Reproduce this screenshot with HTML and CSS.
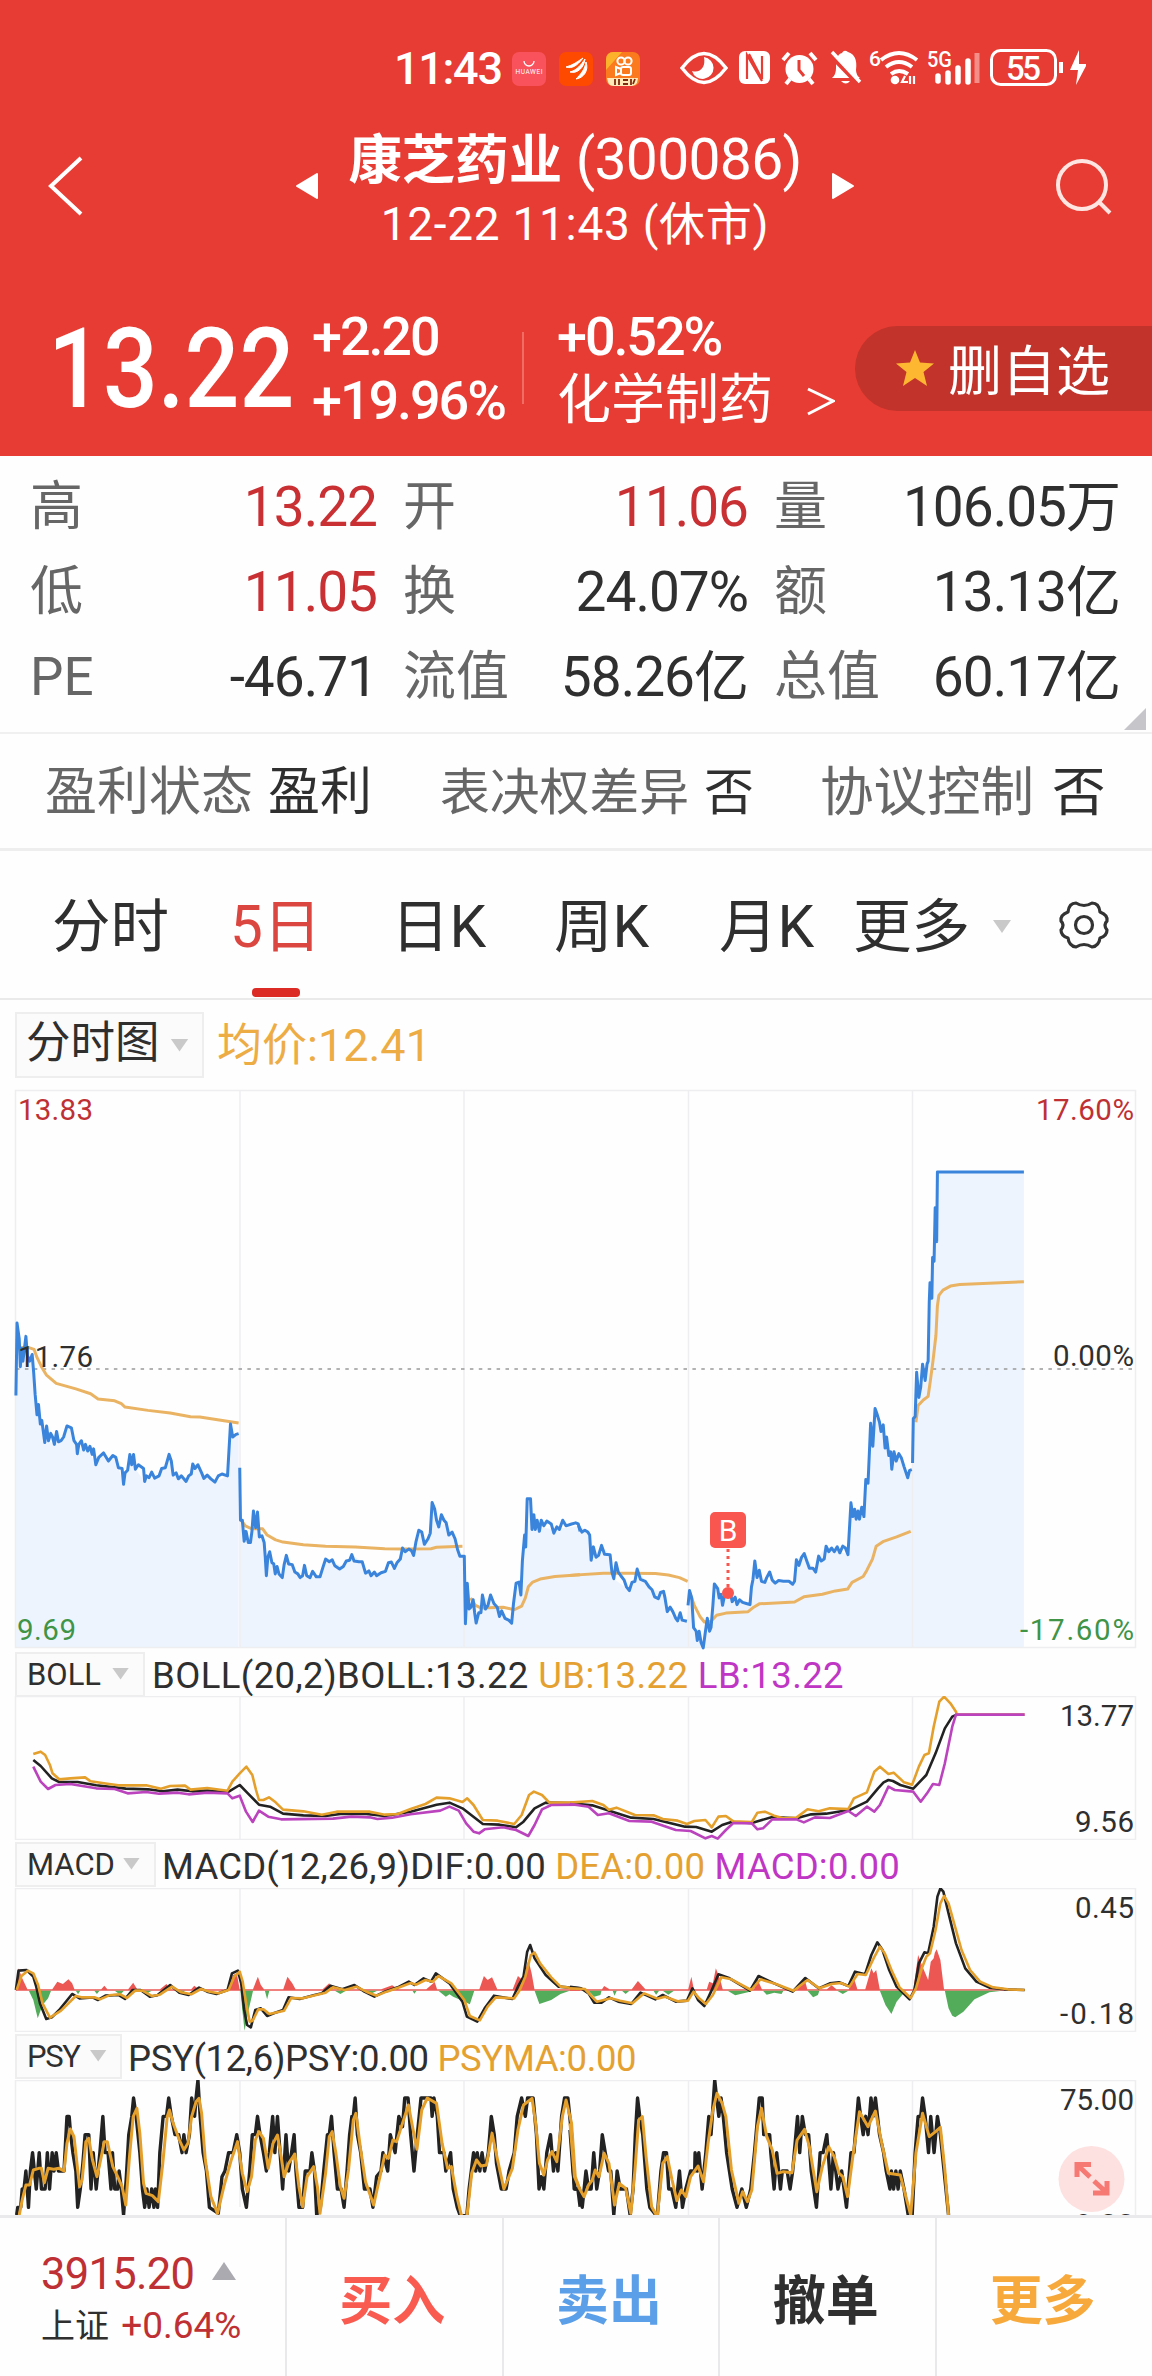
FILE: index.html
```html
<!DOCTYPE html>
<html lang="zh-CN">
<head>
<meta charset="utf-8">
<title>康芝药业 (300086)</title>
<link rel="stylesheet" href="styles.css">
</head>
<body>
<header class="header">
  <div class="status">
    <span class="clock">11:43</span>
    <svg class="app" viewBox="0 0 34 34"><rect width="34" height="34" rx="7" fill="#f9525c"/><path d="M12 9a5 5 0 0 0 10 0" fill="none" stroke="#fff" stroke-width="1.3"/><text x="17" y="22" font-size="6.5" fill="#fff" text-anchor="middle" textLength="27">HUAWEI</text></svg>
    <svg class="app" viewBox="0 0 34 34"><rect width="34" height="34" rx="7" fill="#fd4a00"/><path d="M7 15C14 13 18 10 24 6 18 14 13 17 7 15ZM11 20C18 18 22 13 26 7 25 16 18 22 11 20ZM17 27C22 22 26 17 27 10 30 18 25 26 17 27Z" fill="#fff" stroke="#fff"/></svg>
    <svg class="app" viewBox="0 0 34 34"><rect width="34" height="34" rx="7" fill="#fb7a1e"/><path d="M0 18V7a7 7 0 0 1 7-7h9Z" fill="#fdb22c"/><g fill="none" stroke="#fff" stroke-width="2"><circle cx="15" cy="9" r="3.6"/><circle cx="22" cy="9" r="3.6"/><rect x="15" y="15" width="10" height="8" rx="2"/><path d="M15 17l-5-2v8l5-2"/></g><path d="M1 26h31l-1 5q-2 3-5 3H8q-5 0-6-4Z" fill="#ffe9b8"/><path d="M9 27v6M13 27v6M17 28h5M17 32h5M25 27v6M29 27l-2 5" stroke="#7c2c12" stroke-width="1.8"/></svg>
    <svg class="sys" width="408" height="40" viewBox="678 48 408 40" fill="none" stroke="#fff">
      <path d="M682 68Q704 39 726 68Q704 97 682 68Z" stroke-width="3.5"/><path d="M704 57a11 11 0 1 1-12 14q7 2 11-4 2-4 1-10Z" fill="#fff" stroke="none"/>
      <rect x="739" y="51" width="31" height="33" rx="6" fill="#fff" stroke="none"/><path d="M747 79V55l15 26M762 56v23L749 54" stroke="#e73c33" stroke-width="2.200"/>
      <circle cx="799.500" cy="69" r="14" fill="#fff" stroke="none"/><path d="M783 60l6-7M816 60l-6-7M790 79l-4 5M809 79l4 5" stroke-width="4"/><path d="M799 60v10l5 6" stroke="#e73c33" stroke-width="3"/>
      <path d="M832 78q4-3 4-10 0-14 6-15 2-4 6-1 10 3 8 18 0 5 4 8Z" fill="#fff" stroke="none"/><path d="M829 54l29 30" stroke="#e73c33" stroke-width="4"/><path d="M832 52l28 30" stroke-width="3.500"/><path d="M841 81h9q-4 5-9 0Z" fill="#fff" stroke="none"/>
      <path d="M881 60q18-14 36 0M886 67q13-10 26 0M891 74q8-6 17 0" stroke-width="4"/><circle cx="895" cy="80" r="4.300" fill="#fff" stroke="none"/><path d="M905 76l-3 6h6M910 76v8M914 76v8" stroke-width="2.200"/>
      <text x="869" y="66" font-size="21" font-weight="500">6</text><text x="927" y="67" font-size="22" font-weight="500" textLength="25" lengthAdjust="spacingAndGlyphs">5G</text>
      <path d="M938 76v5M948 73v9M958 68v14M968 61v21" stroke-width="5.500" stroke-linecap="round"/><path d="M977 53v30" stroke-width="5" stroke="#f48e88"/>
      <rect x="991.500" y="50.500" width="64" height="34" rx="9" stroke-width="3"/><path d="M1061 62v11" stroke-width="4"/><text x="1023.500" y="80" font-size="33" font-weight="500" text-anchor="middle" textLength="35">55</text>
      <path d="M1079 50l-9 20h8l-2 15 11-21h-8Z" fill="#fff" stroke="none"/>
    </svg>
  </div>
  <div class="titlebar">
    <svg class="back" viewBox="0 0 36 60"><path d="M33 2L3 30l30 28" fill="none" stroke="#fff" stroke-width="4"/></svg>
    <svg class="prev" viewBox="0 0 24 28"><path d="M22 2v24L2 14Z" fill="#fff" stroke="#fff" stroke-width="2" stroke-linejoin="round"/></svg>
    <div class="heading"><div class="name"><b>康芝药业</b> <span>(300086)</span></div><div class="time">12-22 11:43 (休市)</div></div>
    <svg class="next" viewBox="0 0 24 28"><path d="M2 2v24L22 14Z" fill="#fff" stroke="#fff" stroke-width="2" stroke-linejoin="round"/></svg>
    <svg class="search" viewBox="0 0 56 56"><circle cx="26" cy="26" r="24" fill="none" stroke="#ffe5e2" stroke-width="4"/><path d="M43 43l11 11" stroke="#ffe5e2" stroke-width="4"/></svg>
  </div>
  <div class="quote">
    <div class="price"><span>13.22</span></div>
    <div class="change"><span>+2.20</span><span>+19.96%</span></div>
    <div class="sector"><span class="sector-rate">+0.52%</span><span>化学制药</span></div>
    <svg class="chev" viewBox="0 0 28 30"><path d="M1 2l25 12L1 27" fill="none" stroke="#fff" stroke-width="3"/></svg>
    <div class="fav"><svg viewBox="0 0 38 36"><path d="M19 0l5 12.500 14 1-10.500 8.500 3.500 14L19 28 7 36l3.500-14L0 13.500l14-1Z" fill="#fdb731"/></svg><span>删自选</span></div>
  </div>
</header>
<section class="stats">
  <div class="stat"><label>高</label><span class="up">13.22</span></div><div class="stat"><label>开</label><span class="up">11.06</span></div><div class="stat"><label>量</label><span>106.05万</span></div>
  <div class="stat"><label>低</label><span class="up">11.05</span></div><div class="stat"><label>换</label><span>24.07%</span></div><div class="stat"><label>额</label><span>13.13亿</span></div>
  <div class="stat"><label>PE</label><span>-46.71</span></div><div class="stat"><label>流值</label><span>58.26亿</span></div><div class="stat"><label>总值</label><span>60.17亿</span></div>
  <i class="corner"></i>
</section>
<section class="flags">
  <div class="flag f1"><label>盈利状态</label><span>盈利</span></div>
  <div class="flag f2"><label>表决权差异</label><span>否</span></div>
  <div class="flag f3"><label>协议控制</label><span>否</span></div>
</section>
<nav class="tabs">
  <a>分时</a><a class="on">5日</a><a>日K</a><a>周K</a><a>月K</a><a>更多</a>
  <i class="tri"></i>
  <svg class="gear" viewBox="-26 -26 52 52" fill="none" stroke="#333" stroke-width="3.200" stroke-linejoin="round"><path d="M-8-22Q0-17 8-22Q15-22 16-13Q24-10 23-4Q19 0 23 5Q23 11 16 13Q15 21 8 22Q0 17-8 22Q-15 21-16 13Q-23 11-23 5Q-19 0-23-4Q-24-10-16-13Q-15-22-8-22Z"/><circle r="8.500"/></svg>
</nav>
<div class="mainbar"><div class="pick big"><span>分时图</span><i class="tri"></i></div><span class="avg">均价:12.41</span></div>
<svg class="chart" width="1152" height="562" viewBox="0 1088 1152 562">
  <g transform="translate(0 1080) scale(.36996)" class="area">
    <path d="M43 1535V853L46 657 52 700 55 775 59 725 62 760 70 693 74 745 80 760 87 742 91 790 95 850 100 905 104 877 109 930 121 980 131 975 147 985 165 975 181 935 193 940 209 1010 231 985 259 1040 280 1008 293 1030 305 1015 320 1048 334 1093 351 1012 361 1012 366 1052 391 1085 430 1070 457 1012 468 1068 503 1085 521 1038 545 1062 581 1087 615 1070 623 930 629 965 645 956V1535Z"/>
    <path d="M648 1535V1190L660 1247 677 1250 685 1165 696 1168 701 1235 714 1250 720 1340 729 1275 744 1335 763 1345 774 1285 811 1345 865 1343 880 1295 928 1315 951 1283 979 1302 988 1333 1042 1328 1066 1320 1088 1265 1118 1285 1132 1217 1147 1255 1163 1225 1168 1142 1186 1208 1206 1197 1230 1240 1243 1287 1254 1287 1258 1470 1263 1360 1287 1468 1304 1392 1344 1425 1383 1468 1395 1360 1408 1392 1425 1132 1434 1132 1443 1205 1497 1215 1568 1205V1535Z"/>
  </g>
  <g transform="translate(570 1080) scale(.37113 .36996)" class="area">
    <path d="M25 1535V1205L48 1222 57 1298 85 1258 108 1283 118 1348 160 1380 181 1322 221 1378 252 1382 262 1437 290 1462 315 1463 322 1380 333 1480 359 1535 370 1455 380 1480 389 1362 411 1420 425 1385 437 1410 485 1418 498 1300 516 1355 600 1363 610 1297 631 1280 662 1330 670 1287 690 1260 749 1283 757 1143 771 1187 792 1180 797 1080 803 1090 810 928 816 990 822 888 838 950 867 1052 886 1010 910 1075 921 1053 925 915 930 910 934 790 940 858 950 768 957 812 965 760 970 548 977 480 990 250 1223 248V1535Z"/>
  </g>
  <path class="grid" d="M15.500 1090.500H1135.500V1647.500H15.500ZM240 1090V1647M464 1090V1647M688.500 1090V1647M912.500 1090V1647"/>
  <path d="M16 1369H1135" stroke="#999" stroke-width="1.600" stroke-dasharray="3.500 5.400"/>
  <text class="lab up" x="18" y="1120" textLength="75">13.83</text>
  <text class="lab dn" x="17" y="1640" textLength="59">9.69</text>
  <g transform="translate(0 1080) scale(.36996)" class="line">
    <g class="avgline">
      <polyline points="46,700 52,725 65,722 80,724 92,728 100,750 112,775 125,797 152,820 205,835 245,848 265,862 310,867 328,875 338,884 400,893 460,900 515,910 540,911 645,927"/>
      <polyline points="652,1190 663,1205 680,1213 710,1213 722,1230 745,1243 765,1249 820,1256 880,1260 960,1262 1040,1267 1090,1268 1165,1267 1180,1263 1250,1260"/>
      <polyline points="1272,1400 1285,1420 1300,1427 1360,1425 1390,1432 1410,1422 1420,1400 1428,1370 1440,1357 1460,1349 1500,1342 1568,1337"/>
    </g>
    <g class="priceline">
      <polyline points="43,853 46,657 52,700 55,775 59,725 62,760 70,693 74,745 80,760 87,742 91,790 95,850 100,905 104,877 109,930 113,920 121,980 126,935 131,975 137,955 142,965 147,985 153,950 158,978 165,975 172,965 181,935 193,940 200,975 207,985 209,1010 213,985 220,975 226,1000 231,985 237,1003 243,990 249,1012 253,997 259,1040 267,1020 280,1008 293,1030 305,1015 313,1020 320,1048 330,1050 334,1093 338,1062 345,1055 351,1012 356,1040 361,1012 366,1052 374,1040 388,1050 391,1085 396,1070 403,1075 410,1060 418,1076 430,1070 437,1050 447,1048 457,1012 463,1030 468,1068 476,1062 482,1078 490,1070 503,1085 510,1070 517,1065 521,1038 527,1050 535,1040 545,1062 551,1077 560,1068 570,1078 581,1087 590,1070 600,1065 615,1070 619,1000 623,930 629,965 638,958 645,956"/>
      <polyline points="648,1048 650,1190 655,1190 660,1247 665,1220 671,1250 677,1250 681,1220 685,1165 691,1210 696,1168 701,1235 708,1232 714,1250 717,1290 720,1340 724,1290 729,1275 735,1305 740,1308 744,1335 749,1315 754,1335 763,1345 768,1310 774,1285 780,1308 790,1310 797,1330 805,1335 811,1345 818,1340 823,1312 829,1340 838,1345 845,1328 855,1343 865,1343 872,1320 880,1295 890,1302 898,1297 905,1313 918,1322 928,1315 936,1300 945,1298 951,1283 957,1300 970,1302 979,1302 988,1333 997,1327 1003,1340 1012,1330 1018,1340 1030,1332 1042,1328 1050,1305 1058,1303 1066,1320 1073,1305 1082,1295 1088,1265 1095,1275 1105,1268 1112,1272 1118,1285 1124,1250 1132,1217 1140,1222 1147,1255 1157,1240 1163,1225 1168,1142 1175,1160 1180,1190 1186,1208 1193,1175 1200,1190 1206,1197 1213,1230 1222,1222 1230,1240 1237,1270 1243,1287 1255,1287 1258,1470 1263,1360 1268,1430 1273,1425 1279,1405 1283,1440 1287,1468 1294,1440 1300,1440 1304,1392 1312,1430 1319,1420 1326,1392 1335,1415 1344,1425 1350,1450 1356,1435 1365,1455 1375,1460 1383,1468 1388,1415 1395,1360 1403,1357 1408,1392 1412,1300 1418,1230 1421,1262 1425,1132 1434,1132 1438,1215 1443,1175 1447,1215 1452,1190 1458,1220 1463,1190 1470,1205 1478,1192 1490,1200 1497,1225 1505,1208 1512,1215 1521,1190 1530,1205 1545,1200 1556,1197 1563,1200 1568,1220"/>
    </g>
  </g>
  <g transform="translate(570 1080) scale(.37113 .36996)" class="line">
    <g class="avgline">
      <polyline points="25,1337 0,1339 90,1333 160,1333 230,1334 265,1338 295,1345 317,1355"/>
      <polyline points="322,1385 335,1420 350,1450 362,1465 380,1463 395,1447 420,1441 480,1437 495,1425 510,1416 605,1411 630,1397 680,1390 715,1381 748,1376 760,1358 790,1342 800,1325 815,1295 825,1260 845,1247 880,1235 918,1220"/>
      <polyline points="932,925 938,880 952,865 965,855 970,820 978,760 986,690 990,610 994,582 1005,568 1025,557 1050,553 1223,545"/>
    </g>
    <g class="priceline">
      <polyline points="23,1205 32,1222 40,1217 48,1222 53,1230 57,1298 63,1262 70,1290 77,1285 85,1258 93,1282 108,1283 113,1330 118,1348 124,1305 130,1330 137,1340 146,1352 152,1370 160,1380 167,1358 175,1355 181,1322 190,1350 203,1355 213,1370 221,1378 228,1397 238,1402 244,1385 252,1382 256,1400 262,1437 270,1425 277,1437 285,1455 290,1462 297,1440 302,1460 315,1463"/>
      <polyline points="318,1420 322,1380 328,1400 333,1480 340,1490 343,1515 348,1490 353,1520 359,1535 365,1490 370,1455 376,1490 380,1480 385,1420 389,1362 398,1375 402,1400 407,1390 411,1420 416,1395 425,1385 432,1385 437,1410 445,1398 450,1418 457,1405 465,1412 475,1415 485,1418 489,1370 493,1350 498,1300 504,1345 510,1325 516,1355 525,1358 530,1345 538,1330 545,1352 553,1360 562,1353 575,1355 590,1355 600,1363 605,1355 610,1297 617,1312 624,1290 631,1280 638,1300 645,1320 655,1320 662,1330 670,1287 677,1300 685,1295 690,1260 697,1275 705,1265 712,1275 720,1262 727,1278 735,1260 742,1265 749,1283 752,1230 757,1143 762,1180 767,1160 771,1187 776,1165 780,1187 786,1155 792,1180 797,1080 803,1090 807,1000 810,928 816,990 822,888 828,905 834,925 838,950 844,932 849,995 853,965 859,1015 864,1005 867,1052 873,1005 879,1030 886,1010 893,1022 900,1045 910,1075 915,1055 921,1053"/>
      <polyline points="923,1035 925,915 930,910 934,790 940,858 945,830 950,768 957,812 962,768 965,760 968,600 970,548 975,590 977,480 981,490 984,345 988,437 990,249 1223,249"/>
    </g>
  </g>
  <text class="lab" x="18" y="1367" textLength="75">11.76</text>
  <text class="lab up" x="1036" y="1120" textLength="98">17.60%</text>
  <text class="lab" x="1053" y="1366" textLength="81">0.00%</text>
  <text class="lab dn" x="1020" y="1640" textLength="114">-17.60%</text>
  <path d="M728 1549V1588" stroke="#f9564f" stroke-width="3" stroke-dasharray="3 4"/>
  <rect x="710" y="1512" width="36" height="36" rx="5" fill="#f9564f"/><text x="728" y="1541" font-size="30" fill="#fff" text-anchor="middle">B</text><circle cx="728" cy="1593" r="6" fill="#f9564f"/>
</svg>
<div class="bar"><div class="pick p1"><span>BOLL</span><i class="tri"></i></div><div class="legend l1"><span>BOLL(20,2)BOLL:13.22</span> <span class="o">UB:13.22</span> <span class="m">LB:13.22</span></div></div>
<svg class="chart" width="1152" height="144" viewBox="0 1696 1152 144">
  <path class="grid" d="M15.500 1696.500H1135.500V1839.500H15.500ZM240 1696V1840M464 1696V1840M688.500 1696V1840M912.500 1696V1840"/>
  <g transform="translate(0 1640) scale(.36996 .33333)" class="line thin">
    <polyline class="k" points="90,360 110,378 140,415 160,426 210,426 260,436 340,446 400,448 440,454 480,449 520,454 560,452 615,457 648,435 670,460 700,494 730,500 765,521 820,526 880,528 920,522 990,522 1040,528 1110,515 1180,494 1215,488 1250,505 1305,552 1350,554 1395,562 1415,545 1445,505 1475,488 1568,490"/>
    <polyline class="oo" points="90,342 110,335 122,345 135,375 142,400 160,418 190,415 230,412 245,424 290,431 320,436 395,436 435,446 460,438 500,437 515,449 560,444 615,452 628,425 648,400 666,380 682,405 692,450 700,480 712,480 727,472 745,487 765,509 820,514 870,524 910,515 1000,515 1040,524 1075,522 1110,507 1150,492 1180,473 1215,475 1250,486 1263,475 1280,495 1305,540 1345,542 1390,552 1410,525 1430,465 1443,455 1465,465 1485,488 1568,488"/>
    <polyline class="mm" points="90,380 110,425 130,447 150,435 190,432 260,445 310,447 345,460 395,456 430,461 480,458 510,463 560,458 615,460 628,475 648,467 665,515 683,546 700,512 725,530 760,538 900,536 950,530 1000,532 1020,537 1060,533 1110,523 1190,512 1215,500 1240,512 1260,550 1280,575 1295,580 1310,568 1360,562 1395,570 1428,588 1445,555 1465,508 1490,495 1568,494"/>
  </g>
  <g transform="translate(570 1640) scale(.37113 .33333)" class="line thin">
    <polyline class="k" points="0,490 60,496 110,514 165,533 225,537 310,560 340,561 382,575 410,555 435,546 490,549 545,531 610,535 650,523 690,521 755,509 800,485 830,445 845,427 858,420 870,423 890,435 925,446 960,405 985,340 1010,265 1030,230 1042,224"/>
    <polyline class="oo" points="0,488 60,483 90,495 105,509 125,503 175,525 225,526 250,537 290,542 315,552 335,543 365,540 382,562 400,530 420,528 440,544 490,546 505,518 525,515 550,527 575,535 610,533 640,508 670,514 700,505 750,507 765,475 800,457 820,395 835,380 858,402 872,398 900,427 922,434 940,380 955,345 967,340 980,260 995,185 1008,170 1025,190 1040,215 1042,224 1225,224"/>
    <polyline class="mm" points="0,492 50,500 75,525 105,520 160,543 220,545 285,570 325,573 365,595 382,588 398,596 420,570 440,549 490,550 505,568 520,565 545,538 610,538 630,547 660,532 700,534 750,513 770,528 800,500 820,515 835,495 858,440 875,450 925,455 945,485 962,460 978,432 995,435 1010,370 1030,260 1040,224 1225,224"/>
  </g>
  <text class="lab big-lab" x="1060" y="1726" textLength="74">13.77</text><text class="lab big-lab" x="1075" y="1832" textLength="59">9.56</text>
</svg>
<div class="bar"><div class="pick p2"><span>MACD</span><i class="tri"></i></div><div class="legend l2"><span>MACD(12,26,9)DIF:0.00</span> <span class="o">DEA:0.00</span> <span class="m">MACD:0.00</span></div></div>
<svg class="chart" width="1152" height="144" viewBox="0 1888 1152 144">
  <path class="grid" d="M15.500 1888.500H1135.500V2031.500H15.500ZM240 1888V2032M464 1888V2032M688.500 1888V2032M912.500 1888V2032"/>
  <g transform="translate(0 1640) scale(.36996 .33333)" class="line thin">
    <path class="rf" d="M43 1048H1568V1052H43ZM45 1050L50 985 60 1015 75 1050ZM140 1050L155 1025 170 1032 185 1018 195 1030 202 1050ZM272 1050L282 1037 292 1050ZM345 1050L360 1028 372 1050ZM430 1050L450 1032 460 1050ZM515 1050L525 1037 540 1050ZM615 1050L630 1005 640 1000 648 1050ZM683 1050L697 1010 705 1035 715 1050ZM765 1050L777 1010 790 1030 800 1050ZM870 1050L890 1030 898 1050ZM1025 1050L1060 1036 1080 1050ZM1150 1050L1175 1026 1182 1050ZM1295 1050L1308 1008 1318 1020 1330 1012 1345 1050ZM1385 1050L1400 1008 1412 1020 1428 960 1437 1000 1445 1050Z"/>
    <path class="gf" d="M78 1052L90 1080 102 1135 115 1095 130 1075 138 1052ZM205 1052L211 1063 217 1052ZM255 1052L262 1062 269 1052ZM310 1052L325 1064 335 1052ZM375 1052L395 1062 410 1052ZM480 1052L492 1062 500 1052ZM650 1052L655 1110 661 1172 672 1110 684 1052ZM716 1052L722 1078 728 1052ZM905 1052L920 1062 935 1052ZM985 1052L1005 1060 1020 1052ZM1115 1052L1120 1061 1126 1052ZM1185 1052L1205 1070 1215 1063 1225 1070 1245 1080 1270 1093 1282 1052ZM1445 1052L1458 1092 1490 1080 1515 1062 1540 1052Z"/>
    <polyline class="k" points="43,1050 50,992 72,990 90,1010 98,1040 108,1090 125,1137 140,1132 160,1110 195,1062 215,1075 250,1072 265,1080 285,1067 320,1065 338,1077 358,1050 380,1050 405,1070 425,1066 460,1035 485,1058 510,1065 538,1043 560,1055 585,1062 615,1050 627,1000 643,992 652,1030 660,1110 668,1155 678,1162 690,1110 705,1105 722,1128 740,1120 765,1110 780,1072 810,1077 850,1065 870,1060 893,1037 925,1048 958,1035 985,1055 1012,1070 1040,1055 1075,1042 1105,1025 1120,1035 1145,1015 1165,1025 1178,1000 1215,1030 1250,1085 1262,1130 1290,1145 1310,1105 1335,1067 1385,1077 1400,1040 1415,1010 1425,935 1433,915 1445,955 1475,1005 1510,1040 1568,1045"/>
    <polyline class="oo" points="45,1050 58,1008 75,992 90,1000 103,1035 115,1090 135,1133 165,1112 205,1068 220,1072 255,1072 270,1078 295,1066 325,1063 343,1074 365,1052 385,1052 410,1068 432,1064 465,1040 490,1057 517,1063 543,1047 567,1055 590,1060 618,1050 633,1010 648,995 656,1025 666,1095 675,1145 683,1142 698,1108 712,1108 728,1122 768,1112 787,1074 818,1075 880,1058 900,1042 932,1050 963,1040 990,1055 1018,1067 1045,1055 1080,1042 1110,1029 1125,1034 1150,1020 1170,1025 1185,1008 1220,1030 1255,1080 1270,1128 1297,1141 1318,1100 1340,1072 1390,1075 1405,1050 1420,1010 1435,945 1445,938 1460,970 1490,1012 1515,1040 1568,1047"/>
  </g>
  <g transform="translate(570 1640) scale(.37113 .33333)" class="line thin">
    <path class="rf" d="M0 1048H1225V1052H0ZM85 1050L92 1038 110 1050ZM165 1050L183 1023 205 1050ZM318 1050L327 1010 334 1050ZM368 1050L375 1025 385 1030 393 985 405 1020 412 1050ZM495 1050L505 1018 518 1050ZM612 1050L632 1018 640 1050ZM690 1050L705 1036 720 1050ZM750 1050L765 1015 775 1050ZM795 1050L808 1000 812 985 818 1000 825 990 835 1050ZM925 1050L938 945 948 975 965 1020 972 965 980 955 983 938 988 928 998 960 1008 1050Z"/>
    <path class="gf" d="M50 1052L65 1070 82 1065 85 1052ZM115 1052L120 1067 126 1052ZM140 1052L150 1062 160 1052ZM225 1052L232 1064 240 1052ZM250 1052L265 1064 280 1052ZM425 1052L445 1066 485 1055 488 1052ZM520 1052L530 1064 550 1058 570 1062 575 1052ZM640 1052L655 1072 668 1065 672 1052ZM720 1052L735 1062 750 1052ZM835 1052L850 1095 866 1122 880 1085 900 1058 905 1052ZM1010 1052L1020 1105 1030 1127 1038 1132 1060 1115 1090 1078 1130 1057 1165 1052Z"/>
    <polyline class="k" points="0,1040 30,1045 50,1060 65,1088 85,1088 105,1072 130,1085 165,1092 190,1058 230,1078 250,1065 285,1085 315,1082 330,1045 345,1080 362,1098 380,1055 400,1003 430,1015 485,1052 508,1008 550,1030 600,1055 634,1014 670,1045 700,1030 725,1027 750,1038 768,995 795,1003 812,945 828,907 842,930 860,990 880,1040 915,1078 928,1050 940,970 955,937 965,940 980,860 990,770 998,745 1006,755 1020,820 1040,910 1065,985 1095,1025 1130,1043 1170,1048 1225,1050"/>
    <polyline class="oo" points="0,1045 40,1047 72,1085 110,1075 135,1082 168,1090 200,1060 235,1076 256,1070 290,1084 318,1082 333,1055 348,1075 366,1092 385,1065 408,1012 435,1018 488,1050 513,1018 555,1032 602,1052 640,1020 672,1045 705,1032 730,1029 753,1040 775,1002 797,1005 818,955 835,920 848,940 868,995 888,1042 918,1074 932,1045 948,985 960,950 970,940 985,870 998,790 1008,768 1020,790 1035,850 1055,930 1078,990 1105,1025 1140,1042 1180,1048 1225,1050"/>
  </g>
  <text class="lab big-lab" x="1075" y="1918" textLength="59">0.45</text><text class="lab big-lab" x="1060" y="2024" textLength="74">-0.18</text>
</svg>
<div class="bar"><div class="pick p3"><span>PSY</span><i class="tri"></i></div><div class="legend l3"><span>PSY(12,6)PSY:0.00</span> <span class="o">PSYMA:0.00</span></div></div>
<svg class="chart" width="1152" height="135" viewBox="0 2080 1152 135">
  <path class="grid" d="M15.500 2230V2080.500H1135.500V2230M240 2080V2207M464 2080V2215M688.500 2080V2215M912.500 2080V2215"/>
  <g transform="translate(0 2030) scale(.36996 .33333)" class="line thick">
    <polyline class="k" points="45,555 48,532 56,532 60,477 65,477 70,423 77,532 82,423 88,368 93,423 98,477 106,368 112,477 122,477 128,368 134,477 141,368 146,423 152,368 158,423 173,423 181,259 187,259 191,314 197,368 205,423 210,532 217,477 224,400 230,314 240,314 246,477 252,368 260,477 270,368 278,259 284,368 292,368 300,477 304,368 310,477 318,477 322,423 328,477 334,555 341,450 348,314 356,260 361,204 368,259 378,368 385,477 391,532 397,477 403,532 410,477 416,532 420,477 426,532 432,368 441,259 450,259 456,204 463,259 473,314 483,314 492,368 497,314 503,368 512,314 518,204 526,259 530,204 535,150 541,259 549,368 558,423 566,532 590,550 600,440 608,423 618,368 630,368 640,314 648,368 655,477 666,532 675,423 682,314 690,314 696,259 703,314 712,368 720,423 728,368 737,259 743,368 750,259 757,368 764,477 773,314 780,423 788,368 795,314 800,423 808,532 818,532 825,423 838,423 843,368 850,423 856,555 866,532 875,423 885,314 890,314 896,259 903,368 912,477 922,477 930,532 938,423 945,314 951,259 955,259 960,204 966,314 975,368 985,477 1000,477 1008,532 1018,440 1030,423 1035,368 1048,423 1055,314 1068,368 1078,259 1088,290 1094,204 1103,204 1110,314 1119,423 1128,314 1138,204 1165,204 1168,259 1173,204 1182,259 1188,368 1200,368 1205,423 1218,368 1225,477 1236,532 1245,560 1262,555 1268,477 1280,368 1286,423 1290,368 1297,423 1303,368 1310,423 1320,368 1328,259 1336,314 1342,400 1355,477 1368,477 1376,423 1390,368 1398,259 1410,204 1420,259 1426,204 1441,204 1450,314 1457,477 1463,440 1470,477 1478,368 1488,314 1496,423 1502,368 1508,423 1518,259 1526,204 1535,204 1545,314 1552,477 1562,477 1568,530"/>
    <polyline class="oo" points="52,555 60,510 70,465 80,465 90,420 105,415 112,415 120,458 130,415 145,418 160,415 173,423 181,340 190,297 200,320 215,470 222,450 232,335 240,325 250,390 262,440 272,390 282,335 290,335 305,410 318,440 330,470 340,525 350,380 360,260 370,235 378,310 388,460 395,490 412,497 428,515 440,400 452,260 458,240 468,280 485,330 497,360 508,340 518,260 530,215 538,205 545,250 555,390 570,500 588,550 605,470 625,390 642,335 655,430 668,485 680,440 690,330 700,305 712,325 725,415 738,340 750,315 760,380 768,440 780,400 797,372 808,470 818,530 830,440 848,410 858,470 865,550 880,430 890,320 898,305 908,370 920,470 930,505 942,420 955,270 962,250 975,360 988,455 1010,525 1025,450 1040,375 1050,385 1062,330 1072,335 1085,290 1104,225 1115,290 1127,358 1140,240 1155,204 1180,220 1195,340 1210,415 1220,410 1235,500 1248,560 1262,560 1275,430 1288,390 1300,408 1315,405 1330,310 1345,390 1362,477 1385,415 1400,300 1415,225 1438,205 1448,280 1458,400 1470,435 1480,390 1492,365 1505,395 1520,260 1530,210 1545,280 1555,440 1568,480"/>
  </g>
  <g transform="translate(570 2030) scale(.37113 .33333)" class="line thick">
    <polyline class="k" points="0,300 8,423 14,477 25,477 33,532 43,423 50,477 57,477 64,368 72,477 80,420 87,314 95,368 104,423 110,423 118,555 127,423 135,477 152,477 162,555 170,477 176,314 182,204 188,259 196,314 207,477 215,532 235,560 245,423 252,368 260,368 266,477 274,477 285,532 295,423 303,532 312,477 325,423 336,423 337,368 343,423 347,368 356,477 366,368 374,259 380,314 390,150 395,204 401,259 407,204 413,259 422,368 437,477 450,532 463,477 475,532 487,477 497,368 510,204 518,204 522,314 538,314 541,368 550,477 557,368 567,477 572,423 585,423 593,477 600,423 613,259 619,368 626,259 634,314 643,314 650,423 664,532 674,368 682,368 692,314 703,477 710,368 722,477 732,423 745,532 757,368 765,368 777,204 783,259 790,314 797,259 803,314 811,204 817,259 823,204 834,314 845,368 852,423 862,477 866,423 872,477 878,423 884,477 890,423 900,477 912,560 922,555 930,368 938,259 945,259 950,204 957,259 966,368 972,259 981,368 990,259 998,314 1008,423 1020,555"/>
    <polyline class="oo" points="0,280 12,440 25,475 38,500 50,465 60,450 68,420 78,440 92,370 105,400 120,525 133,460 150,475 164,550 175,420 185,270 195,260 205,380 220,530 235,560 250,400 262,380 275,450 288,512 300,480 312,500 325,440 345,408 360,455 372,340 385,240 396,190 410,220 420,260 435,420 455,520 465,485 478,515 490,480 505,290 516,235 530,320 545,360 558,430 575,425 598,428 612,330 632,298 645,350 665,485 680,410 697,350 712,380 725,430 735,440 748,500 762,380 780,245 803,290 823,243 840,340 858,430 890,435 905,500 918,555 932,370 950,250 968,320 985,305 998,292 1010,420 1020,555"/>
  </g>
  <text class="lab big-lab" x="1060" y="2110" textLength="74">75.00</text><text class="lab big-lab" x="1075" y="2235" textLength="59">8.33</text>
  <circle cx="1091.500" cy="2179" r="33" fill="#fde1e0"/>
  <g fill="none" stroke="#f67973" stroke-width="5"><path d="M1077 2177V2164.500H1091M1078 2165.500L1090 2177M1107 2181V2193H1093M1094 2181L1106 2192"/></g>
</svg>
<footer class="foot">
  <div class="index"><div class="idx-top"><span>3915.20</span><i></i></div><div class="idx-sub"><span>上证</span> <em>+0.64%</em></div></div>
  <button class="b1">买入</button><button class="b2">卖出</button><button class="b3">撤单</button><button class="b4">更多</button>
</footer>
</body>
</html>
```

FILE: styles.css
```css
* { box-sizing: border-box; }
body { margin: 0; width: 1152px; height: 2376px; overflow: hidden; background: #fefefe; color: #2f2f2f; font-family: Roboto, "Noto Sans CJK SC", sans-serif; }
svg { display: block; flex: none; }
span, b, em { white-space: nowrap; }
.header { height: 456px; background: #e73c33; color: #fff; }
.status { height: 110px; padding: 45px 0 0 394px; display: flex; }
.clock { width: 118px; font-size: 45px; line-height: 48px; letter-spacing: -1.300px; font-weight: 500; }
.app { width: 34px; height: 34px; margin: 7px 13px 0 0; }
.sys { margin: 3px 0 0 25px; }
.sys text { fill: #fff; stroke: none; }
.titlebar { height: 186px; display: flex; }
.back { width: 36px; height: 60px; margin: 46px 0 0 48px; }
.prev { width: 24px; height: 28px; margin: 62px 0 0 211px; }
.next { width: 24px; height: 28px; margin: 62px 0 0 0; }
.search { width: 56px; height: 56px; margin: 49px 0 0 201px; }
.heading { width: 512px; text-align: center; }
.name { margin-top: 12px; height: 70px; line-height: 76px; font-size: 53.500px; }
.name span { font-size: 57px; letter-spacing: -.700px; }
.time { font-size: 46px; line-height: 64px; letter-spacing: .700px; }
.quote { height: 160px; display: flex; }
.price { width: 313px; padding-left: 48px; font-size: 111px; line-height: 147px; font-weight: 500; }
.price span { display: inline-block; transform: scaleX(.87); transform-origin: 0 50%; }
.change { width: 211px; border-right: 2px solid #ef6d64; height: 72px; margin-top: 36px; }
.change span, .sector span { display: block; font-size: 54px; line-height: 64px; letter-spacing: -2.100px; position: relative; top: -27px; left: -1px; font-weight: 500; }
.sector { width: 248px; padding-left: 34px; margin-top: 36px; }
.sector span:last-child { letter-spacing: 0; font-weight: 400; }
.chev { width: 28px; height: 30px; margin: 91px 20px 0 35px; }
.fav { flex: 1; height: 85px; margin-top: 30px; border-radius: 43px 0 0 43px; background: #c1332b; padding: 0 0 2px 41px; display: flex; align-items: center; font-size: 54px; }
.fav svg { width: 38px; height: 36px; margin-right: 14px; }
.stats { height: 278px; padding: 9px 32px 0 30px; border-bottom: 2px solid #f0f0f1; display: grid; grid-template-columns: 347px 345px 346px; grid-auto-rows: 85px; column-gap: 26px; position: relative; }
.stat { display: flex; justify-content: space-between; line-height: 85px; font-size: 55px; letter-spacing: -1px; }
.stat label { font-size: 53px; color: #666; letter-spacing: 0; }
.up { color: #bf3034; fill: #bf3034 !important; }
.stat .up { color: #c93034; }
.corner { position: absolute; right: 6px; bottom: 2px; border-left: 22px solid transparent; border-bottom: 22px solid #c6c6ca; }
.flags { height: 117px; display: flex; border-bottom: 3px solid #eee; line-height: 118px; }
.flag { display: flex; }
.flag label { color: #666; }
.f1 { width: 393px; padding-left: 45px; font-size: 52px; gap: 15px; }
.f2 { width: 381px; padding-left: 47px; font-size: 49.800px; gap: 15px; }
.f3 { padding-left: 46px; font-size: 53.500px; gap: 18px; }
.tabs { height: 149px; display: flex; border-bottom: 2px solid #eaeaeb; font-size: 58.500px; line-height: 153px; padding-left: 52px; }
.tabs a { height: 147px; white-space: nowrap; flex: none; }
.tabs a:nth-child(1) { width: 178px; }
.tabs a:nth-child(2) { width: 161px; }
.tabs a:nth-child(3) { width: 163px; }
.tabs a:nth-child(4) { width: 165px; }
.tabs a:nth-child(5) { width: 134px; }
.tabs a:nth-child(6) { width: 140px; }
.tabs .on { position: relative; color: #dc4640; }
.tabs .on::after { content: ""; position: absolute; left: 22px; bottom: 1px; width: 48px; height: 9px; border-radius: 4px; background: #dc2b25; }
.tri { width: 18px; height: 13px; background: #c9c9c9; clip-path: polygon(0 0, 100% 0, 50% 100%); flex: none; }
.tabs .tri { margin: 69px 48px 0 0; }
.gear { width: 52px; height: 52px; margin-top: 48px; margin-left: -1px; }
.mainbar { height: 88px; padding: 12px 0 0 15px; display: flex; }
.pick { border: 2px solid #eee; background: #fbfbfc; display: flex; align-items: center; flex: none; }
.pick.big { width: 189px; height: 66px; padding-left: 9px; gap: 11px; font-size: 44.500px; line-height: 58px; }
.pick.big span { margin-top: -5px; }
.avg { margin-left: 13px; font-size: 45px; line-height: 68px; color: #edac44; }
.bar { height: 46px; padding: 2px 0 0 15px; display: flex; }
.bar .pick { height: 45px; padding-left: 10px; font-size: 31px; gap: 11px; line-height: 44px; }
.bar .pick .tri { width: 17px; height: 12px; margin-top: -2px; }
.bar .p2 { gap: 8px; }
.bar .p3 { gap: 10px; letter-spacing: -1.300px; }
.p1 { width: 130px; }
.p2 { width: 141px; }
.p3 { width: 107px; }
.legend { margin-left: 7px; font-size: 36.500px; line-height: 47px; white-space: nowrap; }
.l1 { letter-spacing: .400px; }
.l2 { letter-spacing: .200px; line-height: 50px; margin-left: 6px; }
.l3 { letter-spacing: -.380px; line-height: 50px; margin-left: 6px; }
svg + .bar ~ .bar { height: 48px; }
.o { color: #e4a132; }
.m { color: #c036c4; }
.lab { font-size: 29.500px; fill: #2f2f2f; }
.dn { fill: #3f9447; }
.grid { fill: none; stroke: #eeeef1; stroke-width: 1.500; }
.area path { fill: #edf4fe; }
.line polyline { fill: none; stroke-width: 3; vector-effect: non-scaling-stroke; stroke-linejoin: round; }
.avgline polyline { stroke: #e9b363; }
.priceline polyline { stroke: #3a84dc; }
.line.thin polyline { stroke-width: 2.600; }
.line.thick .k { stroke-width: 3.400; }
.line .k { stroke: #222; }
.line .oo { stroke: #e59f2b; }
.line .mm { stroke: #bb43bd; }
.rf { fill: #ec5753; }
.gf { fill: #53ac5a; }
.foot { height: 161px; display: flex; border-top: 3px solid #eaeaec; background: #fefefe; }
.index { width: 285px; padding: 31px 0 0 41px; }
.idx-top { display: flex; font-size: 43.500px; line-height: 52px; letter-spacing: -.700px; color: #bf3034; }
.idx-top i { border: 12px solid transparent; border-top: 0; border-bottom: 18px solid #aaaab0; height: 18px; margin: 13px 0 0 18px; }
.idx-sub { font-size: 37px; line-height: 50px; }
.idx-sub span { font-size: 34px; margin-right: 3px; }
.idx-sub em { font-style: normal; color: #bf3034; }
.foot button { width: 217px; border: 0; border-left: 2px solid #e9e9eb; background: none; padding: 0 4px 0 0; font: 700 53px "Noto Sans CJK SC", sans-serif; }
.b1 { color: #f95b51; }
.b2 { color: #5b9fe9; }
.b3 { color: #2f2f2f; }
.b4 { color: #f7a93c; }
```
